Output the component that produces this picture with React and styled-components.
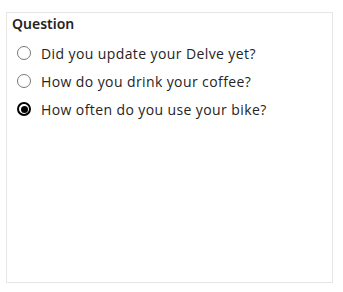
import React, { useState } from "react";
import styled, { createGlobalStyle } from "styled-components";

const Global = createGlobalStyle`
  html, body { margin: 0; padding: 0; background: #ffffff; }
  body { font-family: "Open Sans", "Liberation Sans", sans-serif; }
`;

const Page = styled.div`
  width: 343px;
  height: 292px;
  box-sizing: border-box;
  padding: 12px 10px 9px 6px;
`;

const Panel = styled.div`
  width: 100%;
  height: 100%;
  box-sizing: border-box;
  border: 1px solid #e6e6e6;
  padding: 1px 5px 0 5px;
  display: flex;
  flex-direction: column;
`;

const Title = styled.div`
  font-family: "Noto Sans", "Open Sans", sans-serif;
  font-weight: 600;
  font-size: 14px;
  line-height: 20px;
  color: #252423;
  margin-bottom: 5px;
`;

const List = styled.div`
  display: flex;
  flex-direction: column;
  padding-left: 5px;
`;

const Row = styled.label`
  display: flex;
  align-items: center;
  gap: 10px;
  height: 28px;
  cursor: pointer;
  font-size: 14px;
  letter-spacing: 0.4px;
  color: #252423;
`;

const Radio = styled.span`
  width: 14px;
  height: 14px;
  box-sizing: border-box;
  border-radius: 50%;
  border: ${(p) => (p.$checked ? "2px solid #000000" : "1px solid #7a7876")};
  display: flex;
  align-items: center;
  justify-content: center;
  flex: none;
  background: #ffffff;
  &::after {
    content: "";
    width: 7px;
    height: 7px;
    border-radius: 50%;
    background: #000000;
    display: ${(p) => (p.$checked ? "block" : "none")};
  }
`;

const items = [
  "Did you update your Delve yet?",
  "How do you drink your coffee?",
  "How often do you use your bike?",
];

export default function App() {
  const [sel, setSel] = useState(2);
  return (
    <Page>
      <Global />
      <Panel>
        <Title>Question</Title>
        <List>
          {items.map((t, i) => (
            <Row key={t} onClick={() => setSel(i)}>
              <Radio $checked={sel === i} />
              {t}
            </Row>
          ))}
        </List>
      </Panel>
    </Page>
  );
}
